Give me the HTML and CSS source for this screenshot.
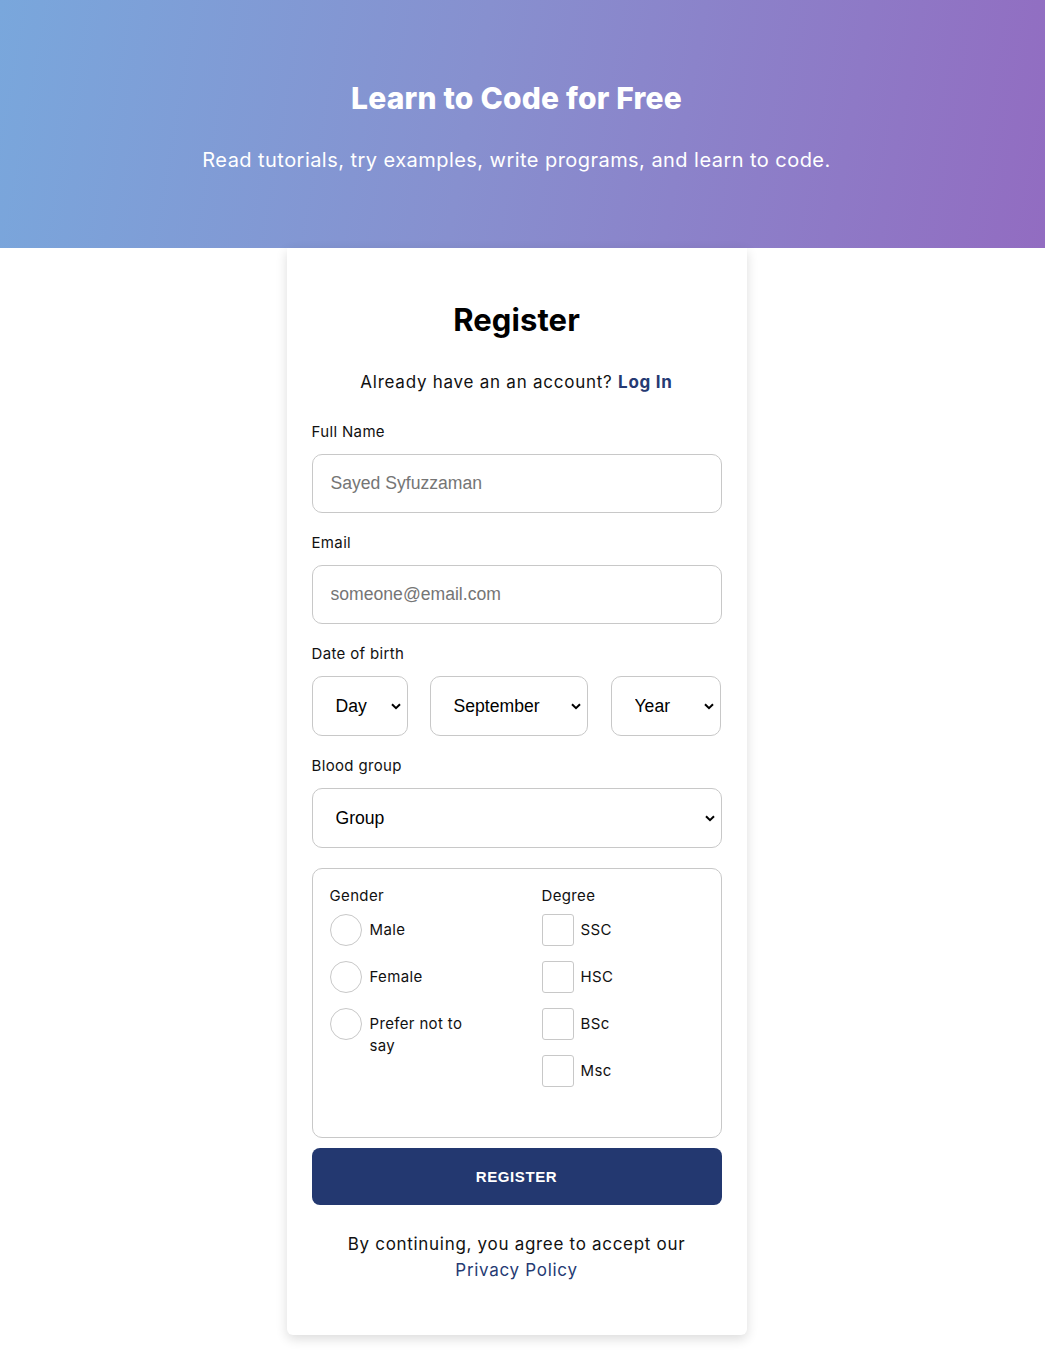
FILE: index.html
```html
<!DOCTYPE html>
<html lang="en">
<head>
<meta charset="utf-8">
<title>Register</title>
<link rel="stylesheet" href="styles.css">
</head>
<body>
<header class="hero">
  <div class="hero-inner">
    <h1 class="hero-title">Learn to Code for Free</h1>
    <p class="hero-sub">Read tutorials, try examples, write programs, and learn to code.</p>
  </div>
</header>
<div class="page">
<main class="card">
  <h2 class="card-title">Register</h2>
  <p class="have-account">Already have an an account? <a href="#" class="login-link">Log In</a></p>
  <form class="form">
    <label class="field-label first" for="name">Full Name</label>
    <input class="text-input" id="name" type="text" placeholder="Sayed Syfuzzaman">

    <label class="field-label" for="email">Email</label>
    <input class="text-input" id="email" type="email" placeholder="someone@email.com">

    <label class="field-label">Date of birth</label>
    <div class="dob-row">
      <span class="select-wrap w-day"><select class="select"><option>Day</option></select><svg class="chev" width="10" height="7" viewBox="0 0 10 7"><path d="M1 1.2 L5 5.2 L9 1.2" fill="none" stroke="#000" stroke-width="2"/></svg></span>
      <span class="select-wrap w-month"><select class="select"><option>September</option></select><svg class="chev" width="10" height="7" viewBox="0 0 10 7"><path d="M1 1.2 L5 5.2 L9 1.2" fill="none" stroke="#000" stroke-width="2"/></svg></span>
      <span class="select-wrap w-year"><select class="select"><option>Year</option></select><svg class="chev" width="10" height="7" viewBox="0 0 10 7"><path d="M1 1.2 L5 5.2 L9 1.2" fill="none" stroke="#000" stroke-width="2"/></svg></span>
    </div>

    <label class="field-label" for="blood">Blood group</label>
    <span class="select-wrap w-full"><select class="select" id="blood"><option>Group</option></select><svg class="chev" width="10" height="7" viewBox="0 0 10 7"><path d="M1 1.2 L5 5.2 L9 1.2" fill="none" stroke="#000" stroke-width="2"/></svg></span>

    <div class="options-box">
      <div class="opt-col">
        <div class="opt-title">Gender</div>
        <label class="opt-row"><span class="radio"></span><span class="opt-text">Male</span></label>
        <label class="opt-row"><span class="radio"></span><span class="opt-text">Female</span></label>
        <label class="opt-row"><span class="radio"></span><span class="opt-text narrow">Prefer not to say</span></label>
      </div>
      <div class="opt-col">
        <div class="opt-title">Degree</div>
        <label class="opt-row"><span class="check"></span><span class="opt-text">SSC</span></label>
        <label class="opt-row"><span class="check"></span><span class="opt-text">HSC</span></label>
        <label class="opt-row"><span class="check"></span><span class="opt-text">BSc</span></label>
        <label class="opt-row"><span class="check"></span><span class="opt-text">Msc</span></label>
      </div>
    </div>

    <button type="button" class="btn-register">REGISTER</button>
  </form>
  <p class="terms">By continuing, you agree to accept our<br><a href="#" class="policy-link">Privacy Policy</a></p>
</main>
</div>
</body>
</html>
```
FILE: styles.css
```css
* { box-sizing: border-box; }
body {
  margin: 0;
  font-family: Inter, "DejaVu Sans", sans-serif;
  color: #111;
  background: #fff;
}
.hero {
  height: 248px;
  background: linear-gradient(100deg, #79a7dc 0%, #8790cf 45%, #926cc1 100%);
  color: #fff;
  text-align: center;
  padding-top: 78px;
}
.hero-inner {
  padding-right: 12px;
}
.hero-title {
  margin: 0;
  font-size: 30px;
  line-height: 40px;
  font-weight: 800;
  letter-spacing: 0.2px;
}
.hero-sub {
  margin: 28px 0 0;
  font-size: 20px;
  line-height: 28px;
  font-weight: 400;
  letter-spacing: 0.45px;
}
.page {
  padding-right: 12px;
  padding-bottom: 20px;
}
.card {
  width: 460px;
  margin: 0 auto;
  padding: 48px 25px 52px;
  background: #fff;
  border-radius: 0 0 6px 6px;
  box-shadow: 0 4px 12px rgba(0,0,0,0.14);
}
.card-title {
  margin: 0;
  text-align: center;
  font-size: 31px;
  line-height: 48px;
  font-weight: 700;
  color: #000;
  letter-spacing: 0.1px;
}
.have-account {
  margin: 25px 0 0;
  text-align: center;
  font-size: 17px;
  line-height: 26px;
  letter-spacing: 0.75px;
}
.login-link {
  color: #253a73;
  font-weight: 700;
  text-decoration: none;
}
.form {
  display: flex;
  flex-direction: column;
}
.field-label {
  display: block;
  font-size: 15px;
  line-height: 22px;
  margin: 19px 0 11px;
  letter-spacing: 0.35px;
}
.field-label.first { margin-top: 26px; }
.text-input {
  width: 100%;
  height: 59px;
  border: 1px solid #c8c8c8;
  border-radius: 10px;
  padding: 0 18px;
  font-family: "Liberation Sans", Arial, sans-serif;
  font-size: 17.6px;
  color: #111;
  outline: none;
}
.text-input::placeholder { color: #757575; }
.dob-row {
  display: flex;
}
.select-wrap {
  position: relative;
  display: block;
}
.w-day { width: 96px; margin-right: 22px; }
.w-month { width: 158px; margin-right: 23px; }
.w-year { width: 110px; }
.w-full { width: 100%; }
.select {
  -webkit-appearance: none;
  appearance: none;
  display: block;
  width: 100%;
  height: 60px;
  border: 1px solid #c8c8c8;
  border-radius: 10px;
  padding: 0 24px 0 23px;
  background: #fff;
  font-family: "Liberation Sans", Arial, sans-serif;
  font-size: 17.6px;
  color: #000;
}
.chev {
  position: absolute;
  right: 7px;
  top: 27px;
  pointer-events: none;
}
.options-box {
  margin-top: 20px;
  border: 1px solid #c8c8c8;
  border-radius: 10px;
  height: 270px;
  padding: 16px 17px 0;
  display: grid;
  grid-template-columns: 212px 1fr;
}
.opt-title {
  font-size: 15px;
  line-height: 22px;
  margin-bottom: 7px;
  letter-spacing: 0.35px;
}
.opt-row {
  display: flex;
  align-items: flex-start;
  gap: 8px;
  margin-bottom: 15px;
  font-size: 15px;
  letter-spacing: 0.35px;
}
.opt-text {
  line-height: 22px;
  padding-top: 5px;
}
.opt-text.narrow { max-width: 100px; }
.radio {
  flex: none;
  width: 32px;
  height: 32px;
  border: 1px solid #c8c8c8;
  border-radius: 50%;
}
.check {
  flex: none;
  width: 32px;
  height: 32px;
  border: 1px solid #c8c8c8;
  border-radius: 3px;
  margin-right: -1px;
}
.btn-register {
  margin-top: 10px;
  height: 57px;
  width: 100%;
  border: none;
  border-radius: 8px;
  background: #233870;
  color: #fff;
  font-family: "Liberation Sans", Arial, sans-serif;
  font-weight: 700;
  font-size: 15px;
  letter-spacing: 0.6px;
}
.terms {
  margin: 26px 0 0;
  text-align: center;
  font-size: 17px;
  line-height: 26px;
  letter-spacing: 0.7px;
}
.policy-link {
  color: #253a73;
  text-decoration: none;
}
```
